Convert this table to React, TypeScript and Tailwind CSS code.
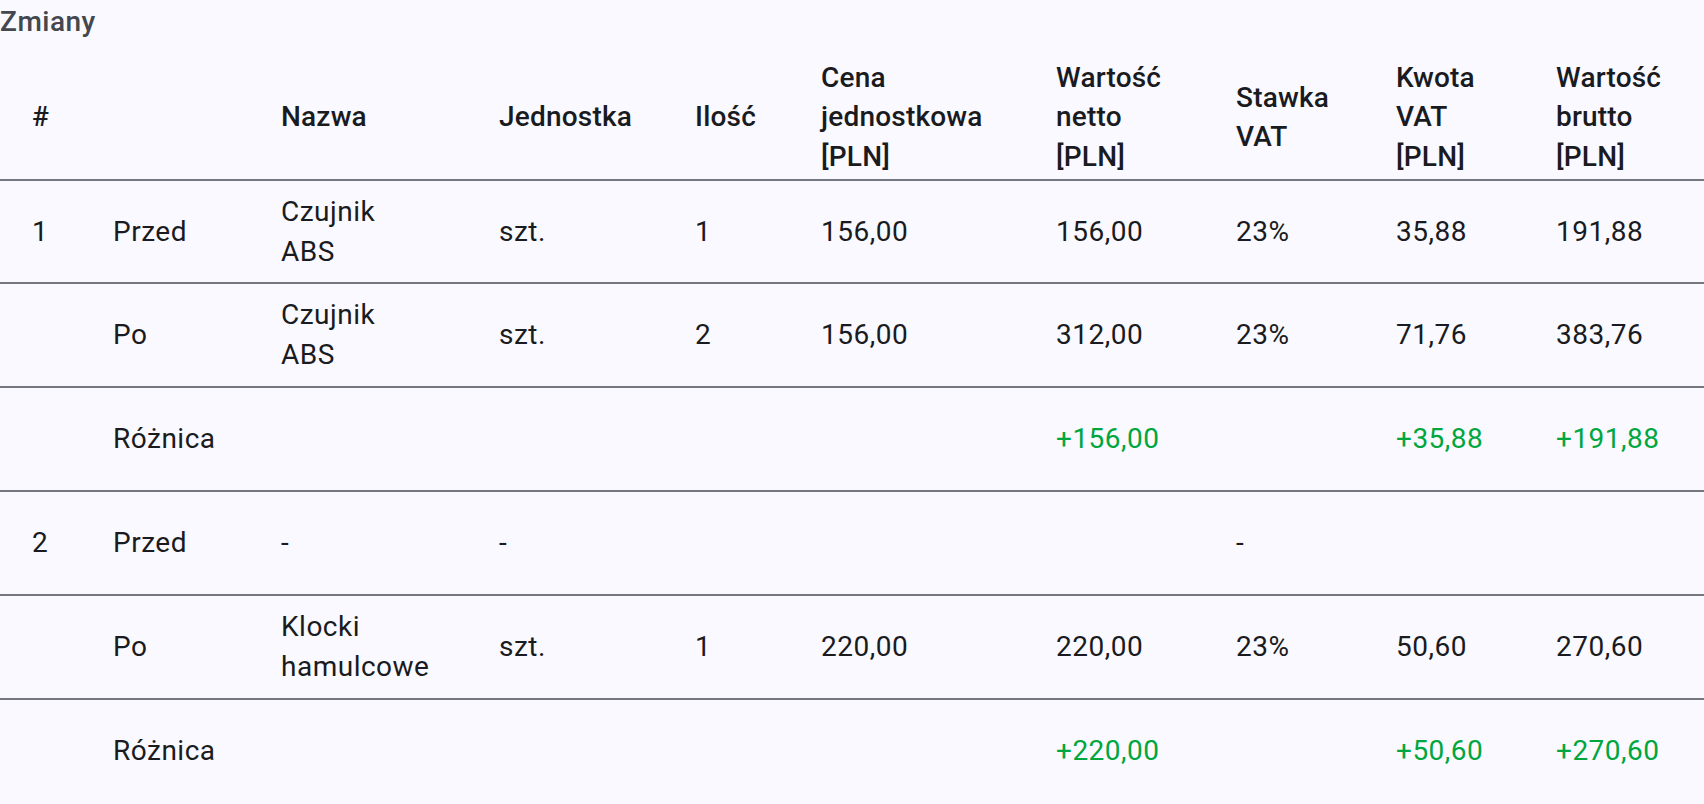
import React from "react";

type Row = {
  idx?: string;
  kind: string;
  name?: React.ReactNode;
  unit?: string;
  qty?: string;
  price?: string;
  net?: string;
  rate?: string;
  vat?: string;
  gross?: string;
  diff?: boolean;
  h: string;
  last?: boolean;
};

const rows: Row[] = [
  { idx: "1", kind: "Przed", name: <>Czujnik<br />ABS</>, unit: "szt.", qty: "1", price: "156,00", net: "156,00", rate: "23%", vat: "35,88", gross: "191,88", h: "h-[101px]" },
  { kind: "Po", name: <>Czujnik<br />ABS</>, unit: "szt.", qty: "2", price: "156,00", net: "312,00", rate: "23%", vat: "71,76", gross: "383,76", h: "h-[102px]" },
  { kind: "Różnica", net: "+156,00", vat: "+35,88", gross: "+191,88", diff: true, h: "h-[102px]" },
  { idx: "2", kind: "Przed", name: "-", unit: "-", rate: "-", h: "h-[102px]" },
  { kind: "Po", name: <>Klocki<br />hamulcowe</>, unit: "szt.", qty: "1", price: "220,00", net: "220,00", rate: "23%", vat: "50,60", gross: "270,60", h: "h-[102px]" },
  { kind: "Różnica", net: "+220,00", vat: "+50,60", gross: "+270,60", diff: true, h: "h-[102px]", last: true },
];

function Cell({ children, h, green, last }: { children?: React.ReactNode; h: string; green?: boolean; last?: boolean }) {
  return (
    <td className={`p-0 border-b-2 border-[#74777f] align-top ${last ? "pb-[4px]" : ""}`}>
      <div className={`${h} flex items-center px-8 whitespace-nowrap ${green ? "text-[#00a63e]" : ""}`}>
        <div>{children}</div>
      </div>
    </td>
  );
}

function Th({ children }: { children: React.ReactNode }) {
  return (
    <th className="px-8 pt-[4px] pb-[3px] border-b-2 border-[#74777f] text-left align-middle font-medium whitespace-nowrap leading-[39.4px] tracking-[0.2px]">
      {children}
    </th>
  );
}

export default function App() {
  return (
    <div
      className="w-[1704px] h-[804px] overflow-hidden bg-[#f9f9ff] text-[#1a1b20] text-[28px]"
      style={{ fontFamily: "Roboto, 'Noto Sans', sans-serif" }}
    >
      <div className="text-[28px] leading-[44px] font-medium text-[#44474e] tracking-[0.5px]">Zmiany</div>
      <table className="table-fixed w-[1704px] border-separate border-spacing-0 mt-[10px]">
        <colgroup>
          <col className="w-[81px]" />
          <col className="w-[168px]" />
          <col className="w-[218px]" />
          <col className="w-[196px]" />
          <col className="w-[126px]" />
          <col className="w-[235px]" />
          <col className="w-[180px]" />
          <col className="w-[160px]" />
          <col className="w-[160px]" />
          <col className="w-[180px]" />
        </colgroup>
        <thead>
          <tr>
            <Th>#</Th>
            <Th>{""}</Th>
            <Th>Nazwa</Th>
            <Th>Jednostka</Th>
            <Th>Ilość</Th>
            <Th>Cena<br />jednostkowa<br />[PLN]</Th>
            <Th>Wartość<br />netto<br />[PLN]</Th>
            <Th>Stawka<br />VAT</Th>
            <Th>Kwota<br />VAT<br />[PLN]</Th>
            <Th>Wartość<br />brutto<br />[PLN]</Th>
          </tr>
        </thead>
        <tbody className="leading-[40px] tracking-[0.5px]">
          {rows.map((r, i) => (
            <tr key={i}>
              <Cell h={r.h} last={r.last}>{r.idx}</Cell>
              <Cell h={r.h} last={r.last}>{r.kind}</Cell>
              <Cell h={r.h} last={r.last}>{r.name}</Cell>
              <Cell h={r.h} last={r.last}>{r.unit}</Cell>
              <Cell h={r.h} last={r.last}>{r.qty}</Cell>
              <Cell h={r.h} last={r.last}>{r.price}</Cell>
              <Cell h={r.h} last={r.last} green={r.diff}>{r.net}</Cell>
              <Cell h={r.h} last={r.last}>{r.rate}</Cell>
              <Cell h={r.h} last={r.last} green={r.diff}>{r.vat}</Cell>
              <Cell h={r.h} last={r.last} green={r.diff}>{r.gross}</Cell>
            </tr>
          ))}
        </tbody>
      </table>
    </div>
  );
}
